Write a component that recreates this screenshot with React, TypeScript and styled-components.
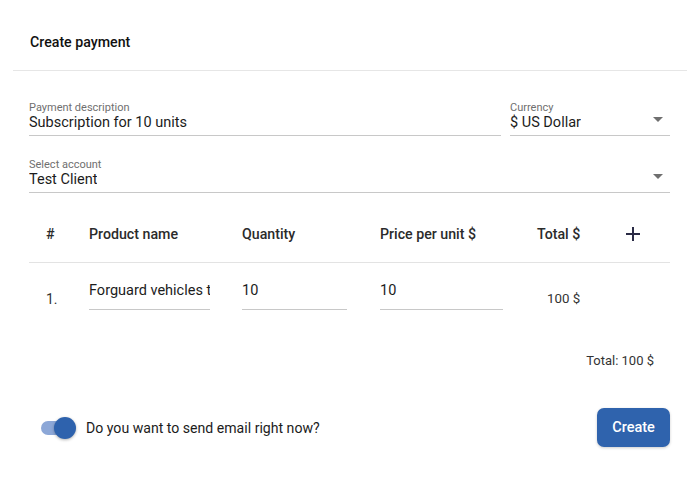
import React from "react";
import styled, { createGlobalStyle } from "styled-components";

const Global = createGlobalStyle`
  html, body { margin: 0; padding: 0; background: #fff; }
  body { font-family: Roboto, "Liberation Sans", Arial, sans-serif; color: #222; }
  * { box-sizing: border-box; }
`;

const Card = styled.div`
  width: 700px;
  height: 479px;
  padding: 0 13px;
  background: #fff;
`;

const Header = styled.div`
  height: 71px;
  padding: 34px 0 0 17px;
  font-size: 14.2px;
  font-weight: 500;
  line-height: 16px;
  color: #111;
  border-bottom: 1px solid #e6e6e6;
`;

const Body = styled.div`
  padding: 0 17px 0 16px;
`;

const FieldRow = styled.div<{ $cols: string; $top: number }>`
  display: grid;
  grid-template-columns: ${(p) => p.$cols};
  column-gap: 9px;
  margin-top: ${(p) => p.$top}px;
`;

const Field = styled.div`
  display: flex;
  flex-direction: column;
  border-bottom: 1px solid #c8c8c8;
  padding-bottom: 3px;
`;

const Label = styled.div`
  font-size: 11px;
  line-height: 13px;
  color: #6f6f6f;
`;

const ValueLine = styled.div`
  display: flex;
  justify-content: space-between;
  align-items: flex-start;
`;

const Value = styled.div`
  font-size: 14.5px;
  line-height: 18px;
  color: #1c1c1c;
  white-space: nowrap;
  overflow: hidden;
`;

const Arrow = styled.svg`
  width: 10px;
  height: 5px;
  margin: 3px 7px 0 0;
  flex: none;
`;

const Table = styled.div`
  display: grid;
  grid-template-columns: 60px 153px 138px 157px 89px 1fr;
`;

const HeadCell = styled.div<{ $pl?: number }>`
  padding: 33px 0 20px ${(p) => p.$pl ?? 0}px;
  font-size: 14.2px;
  font-weight: 500;
  line-height: 16px;
  color: #2b2b2b;
  border-bottom: 1px solid #e3e3e3;
  display: flex;
  align-items: center;
`;

const PlusBtn = styled.svg`
  width: 16px;
  height: 16px;
  margin-left: -1px;
`;

const Cell = styled.div<{ $pl?: number; $pt?: number; $fs?: number }>`
  padding: ${(p) => p.$pt ?? 19}px 0 0 ${(p) => p.$pl ?? 0}px;
  font-size: ${(p) => p.$fs ?? 14}px;
  line-height: 16px;
  color: #333;
`;

const Input = styled.div<{ $w: number }>`
  width: ${(p) => p.$w}px;
  font-size: 14.5px;
  line-height: 18px;
  color: #1c1c1c;
  padding-bottom: 9px;
  border-bottom: 1px solid #c8c8c8;
  white-space: nowrap;
  overflow: hidden;
`;

const TotalLine = styled.div`
  margin-top: 43px;
  padding-right: 16px;
  text-align: right;
  font-size: 13px;
  line-height: 16px;
  color: #333;
`;

const Footer = styled.div`
  margin-top: 39px;
  display: flex;
  align-items: center;
  justify-content: space-between;
  padding-left: 12px;
`;

const SwitchWrap = styled.label`
  display: flex;
  align-items: center;
  gap: 11px;
  font-size: 14.1px;
  color: #1c1c1c;
`;

const Track = styled.span`
  position: relative;
  width: 34px;
  height: 14px;
  border-radius: 7px;
  background: #8ca7d7;
  display: inline-block;
`;

const Thumb = styled.span`
  position: absolute;
  top: -4px;
  right: -1px;
  width: 22px;
  height: 22px;
  border-radius: 50%;
  background: #2e62ad;
  box-shadow: 0 1px 3px rgba(0, 0, 0, 0.3);
`;

const Button = styled.button`
  width: 73px;
  height: 39px;
  border: none;
  border-radius: 7px;
  background: #2f63ad;
  color: #fff;
  font-family: Roboto, "Liberation Sans", Arial, sans-serif;
  font-size: 14.5px;
  font-weight: 500;
  box-shadow: 0 1px 3px rgba(0, 0, 0, 0.2);
`;

const DownArrow = () => (
  <Arrow viewBox="0 0 10 5">
    <path d="M0 0 L10 0 L5 5 Z" fill="#6f6f6f" />
  </Arrow>
);

export default function App() {
  return (
    <>
      <Global />
      <Card>
        <Header>Create payment</Header>
        <Body>
          <FieldRow $cols="1fr 160px" $top={30}>
            <Field>
              <Label>Payment description</Label>
              <Value>Subscription for 10 units</Value>
            </Field>
            <Field>
              <Label>Currency</Label>
              <ValueLine>
                <Value>$ US Dollar</Value>
                <DownArrow />
              </ValueLine>
            </Field>
          </FieldRow>
          <FieldRow $cols="1fr" $top={22}>
            <Field>
              <Label>Select account</Label>
              <ValueLine>
                <Value>Test Client</Value>
                <DownArrow />
              </ValueLine>
            </Field>
          </FieldRow>
          <Table>
            <HeadCell $pl={17}>#</HeadCell>
            <HeadCell>Product name</HeadCell>
            <HeadCell>Quantity</HeadCell>
            <HeadCell>Price per unit $</HeadCell>
            <HeadCell>Total $</HeadCell>
            <HeadCell>
              <PlusBtn viewBox="0 0 16 16">
                <path d="M8 1 V15 M1 8 H15" stroke="#2a2b45" strokeWidth="2" />
              </PlusBtn>
            </HeadCell>

            <Cell $pl={17} $pt={28}>1.</Cell>
            <Cell>
              <Input $w={121}>Forguard vehicles tracking</Input>
            </Cell>
            <Cell>
              <Input $w={105}>10</Input>
            </Cell>
            <Cell>
              <Input $w={123}>10</Input>
            </Cell>
            <Cell $pl={10} $pt={28} $fs={13.3}>100 $</Cell>
            <Cell />
          </Table>
          <TotalLine>Total: 100 $</TotalLine>
          <Footer>
            <SwitchWrap>
              <Track>
                <Thumb />
              </Track>
              Do you want to send email right now?
            </SwitchWrap>
            <Button>Create</Button>
          </Footer>
        </Body>
      </Card>
    </>
  );
}
